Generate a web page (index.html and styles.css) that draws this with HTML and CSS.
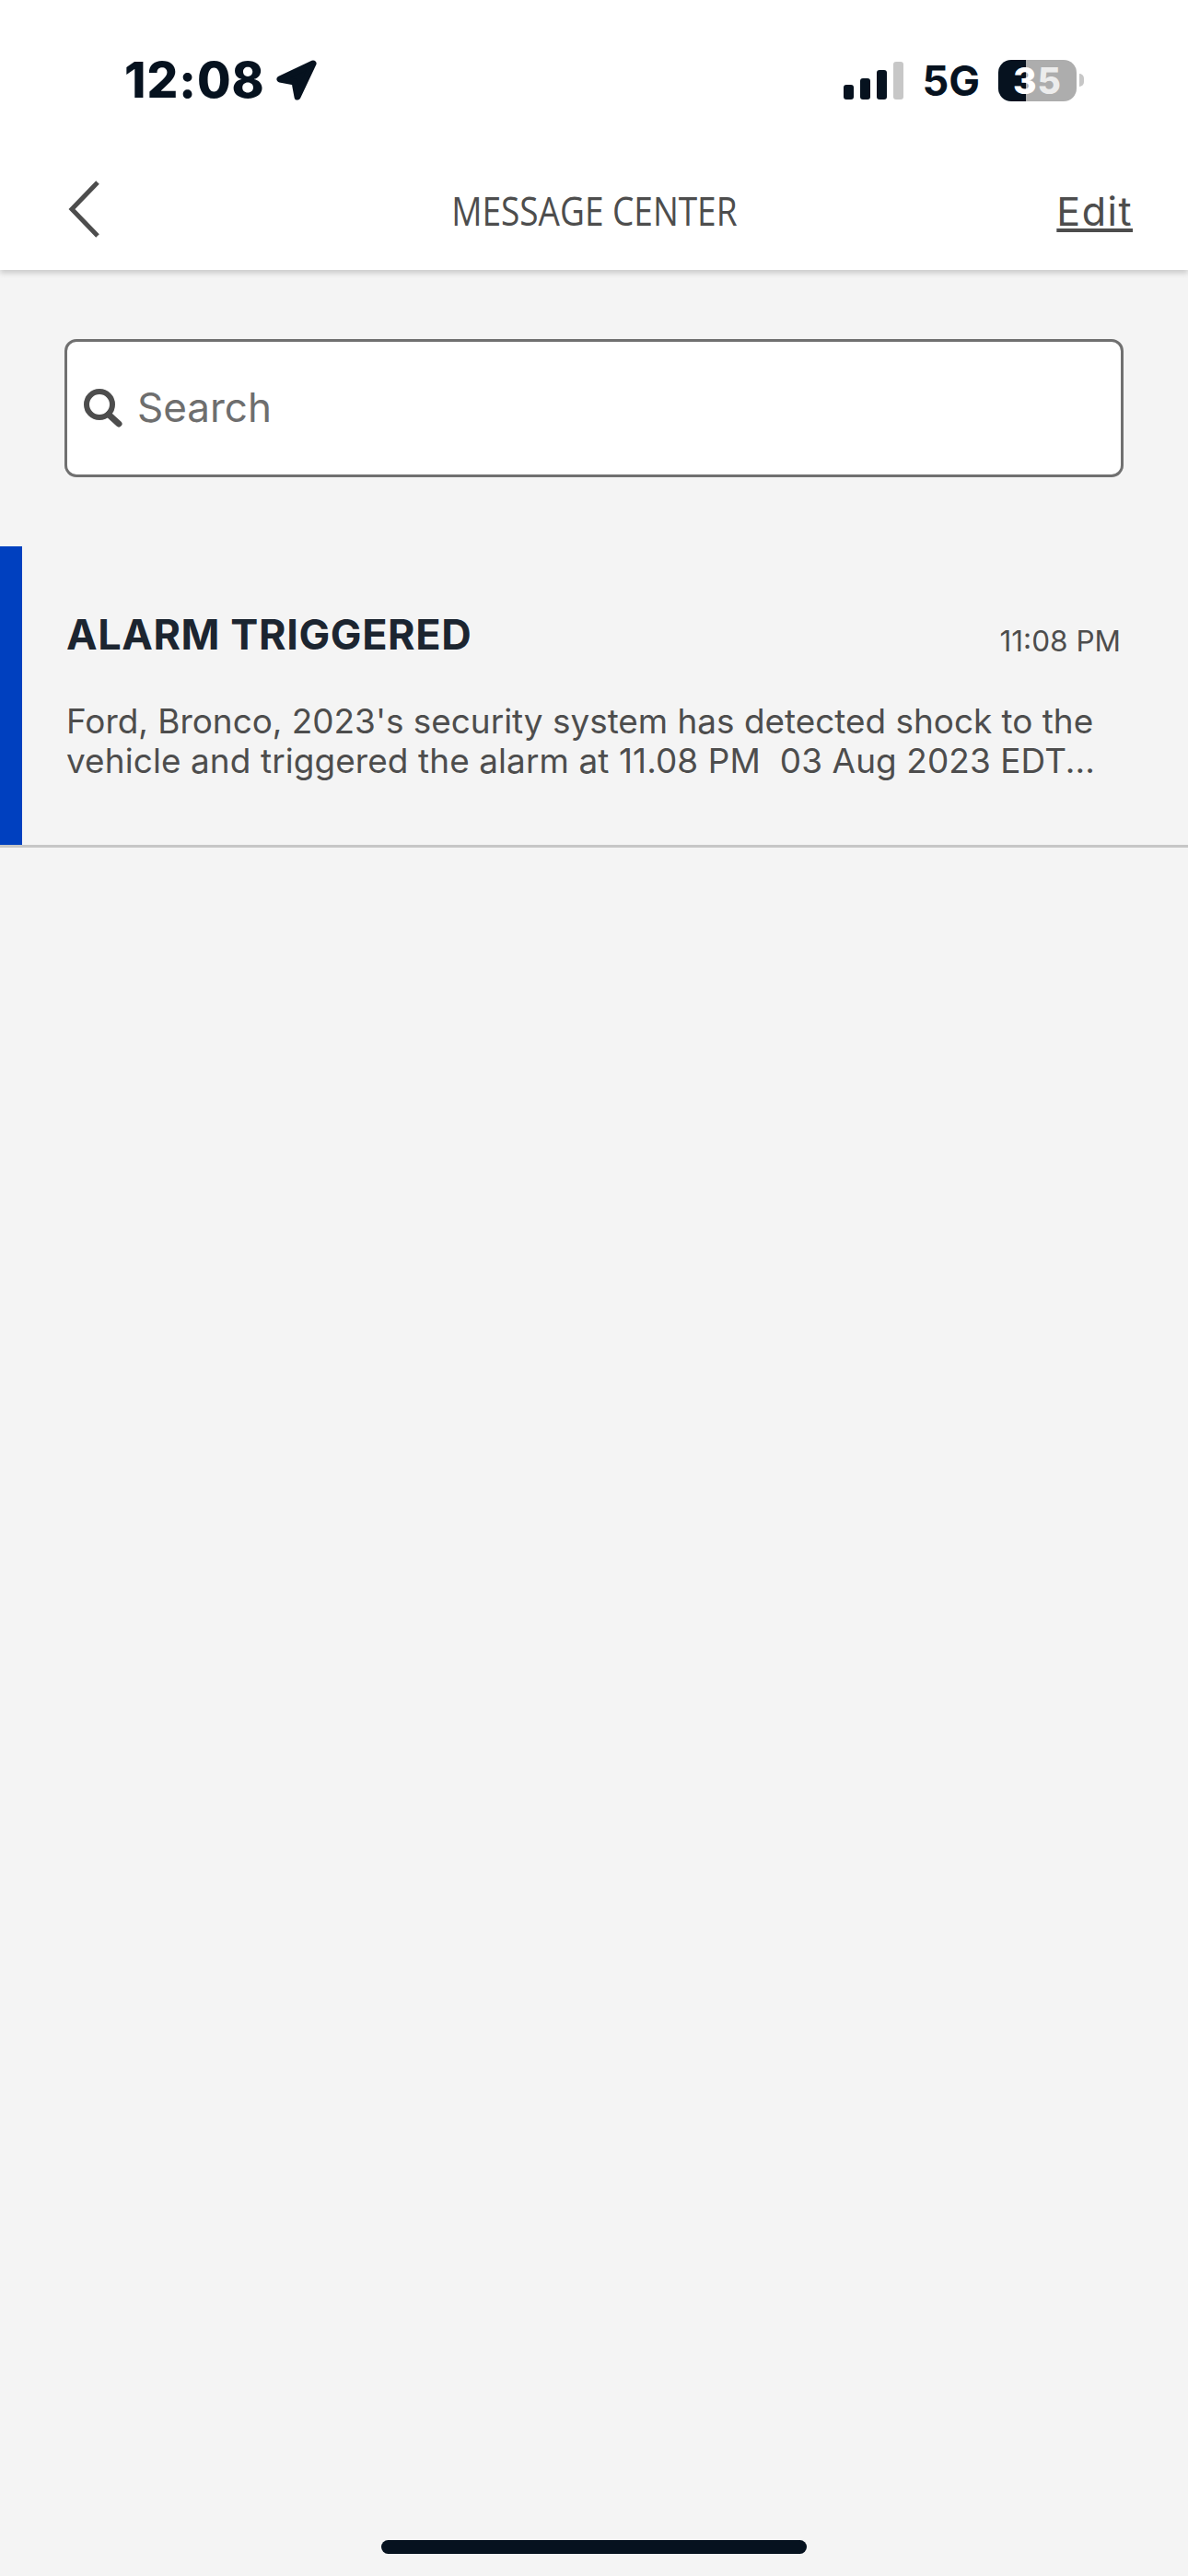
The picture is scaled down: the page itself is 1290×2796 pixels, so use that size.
FILE: index.html
```html
<!DOCTYPE html>
<html lang="en">

<head>
    <meta charset="UTF-8">
    <meta name="viewport" content="width=device-width, initial-scale=1.0">
    <title>Message Center</title>
    <link rel="stylesheet" href="styles.css">
</head>

<body>
    <header class="top">
        <div class="status">
            <div class="status-left">
                <span class="clock">12:08</span>
                <svg class="arrow" width="44" height="44" viewBox="0 0 44 44">
                    <path d="M40 4 L4 21 L20 24 L23 40 Z" fill="#06121f" stroke="#06121f" stroke-width="7" stroke-linejoin="round"/>
                </svg>
            </div>
            <div class="status-right">
                <div class="signal">
                    <span class="bar bar1"></span>
                    <span class="bar bar2"></span>
                    <span class="bar bar3"></span>
                    <span class="bar bar4"></span>
                </div>
                <span class="net">5G</span>
                <div class="battery"><span>3</span><span class="dim">5</span></div>
                <span class="battery-cap"></span>
            </div>
        </div>

        <nav class="nav">
            <a class="back" href="#">
                <svg width="34" height="62" viewBox="0 0 34 62">
                    <polyline points="32,2 4,31 32,60" fill="none" stroke="#4d4d4d" stroke-width="5"/>
                </svg>
            </a>
            <h1 class="title">MESSAGE CENTER</h1>
            <a class="edit" href="#">Edit</a>
        </nav>
    </header>

    <main class="content">
        <div class="search">
            <svg width="42" height="42" viewBox="0 0 42 42">
                <circle cx="17" cy="17" r="14" fill="none" stroke="#4d4d4d" stroke-width="6"/>
                <line x1="27" y1="28" x2="38" y2="38" stroke="#4d4d4d" stroke-width="7" stroke-linecap="round"/>
            </svg>
            <span class="search-text">Search</span>
        </div>

        <article class="message">
            <div class="message-accent"></div>
            <div class="message-main">
                <div class="message-head">
                    <h2 class="message-title">ALARM TRIGGERED</h2>
                    <span class="message-time">11:08 PM</span>
                </div>
                <p class="message-body">Ford, Bronco, 2023's security system has detected shock to the<br><span class="message-line2">vehicle and triggered the alarm at 11.08 PM &nbsp;03 Aug 2023 EDT...</span></p>
            </div>
        </article>
    </main>

    <div class="home-bar"></div>
</body>

</html>
```

FILE: styles.css
```css
body {
    font-family: Inter, sans-serif;
    background-color: #f4f4f4;
    margin: 0;
    padding: 0;
    height: 100vh;
    display: flex;
    flex-direction: column;
}

.top {
    background-color: #fff;
    box-shadow: 0 4px 5px #d0d0d0;
}

.status {
    height: 174px;
    display: flex;
    justify-content: space-between;
    align-items: center;
    padding: 0 113px 0 135px;
    color: #06121f;
    font-weight: 700;
}

.status-left {
    display: flex;
    align-items: center;
    gap: 12px;
}

.clock {
    font-size: 53px;
    font-weight: 800;
    letter-spacing: 1px;
}

.status-right {
    display: flex;
    align-items: center;
}

.signal {
    display: flex;
    align-items: flex-end;
    gap: 7px;
    height: 41px;
}

.bar {
    width: 11px;
    border-radius: 3px;
    background-color: #06121f;
}

.bar1 { height: 16px; }
.bar2 { height: 23px; }
.bar3 { height: 32px; }
.bar4 { height: 41px; background-color: #c7c7c7; }

.net {
    font-size: 45px;
    margin: 0 20px;
}

.battery {
    width: 85px;
    height: 45px;
    border-radius: 14px;
    background: linear-gradient(to right, #06121f 30px, #adadad 30px);
    color: #fff;
    font-size: 39px;
    font-weight: 800;
    letter-spacing: 1px;
    line-height: 45px;
    text-align: center;
}

.dim {
    color: #ececec;
}

.battery-cap {
    width: 5px;
    height: 14px;
    margin-left: 3px;
    border-radius: 0 7px 7px 0;
    background-color: #c7c7c7;
}

.nav {
    height: 109px;
    padding: 0 60px 10px;
    display: grid;
    grid-template-columns: 1fr auto 1fr;
    align-items: center;
    color: #4d4d4d;
}

.back {
    display: flex;
    margin-left: 14px;
    margin-top: -3px;
}

.title {
    margin: 0;
    font-family: "Open Sans", sans-serif;
    font-size: 43px;
    font-weight: 400;
    transform: scaleX(0.86);
}

.edit {
    justify-self: end;
    color: #4d4d4d;
    font-size: 43px;
    letter-spacing: 1.5px;
}

.content {
    padding-top: 75px;
}

.search {
    margin: 0 70px;
    height: 150px;
    box-sizing: border-box;
    border: 3px solid #707070;
    border-radius: 13px;
    background-color: #fff;
    display: flex;
    align-items: center;
    gap: 16px;
    padding-left: 18px;
}

.search-text {
    color: #6e6e6e;
    font-size: 44px;
    margin-top: -2px;
}

.message {
    margin-top: 75px;
    height: 327px;
    box-sizing: border-box;
    border-bottom: 3px solid #c6c6c6;
    display: flex;
}

.message-accent {
    width: 24px;
    background-color: #0040bf;
}

.message-main {
    flex: 1;
    padding: 70px 73px 0 48px;
}

.message-head {
    display: flex;
    justify-content: space-between;
    align-items: flex-end;
}

.message-title {
    margin: 0;
    color: #1c2530;
    font-size: 45px;
    font-weight: 700;
    letter-spacing: 0.6px;
    line-height: 52px;
}

.message-time {
    color: #4d4d4d;
    font-size: 31.5px;
}

.message-body {
    margin: 46px 0 0;
    color: #4d4d4d;
    font-size: 36.9px;
    line-height: 43px;
}

.message-line2 {
    letter-spacing: 0.11px;
}

.home-bar {
    width: 462px;
    height: 15px;
    margin: auto auto 24px;
    border-radius: 8px;
    background-color: #06121f;
}
```
